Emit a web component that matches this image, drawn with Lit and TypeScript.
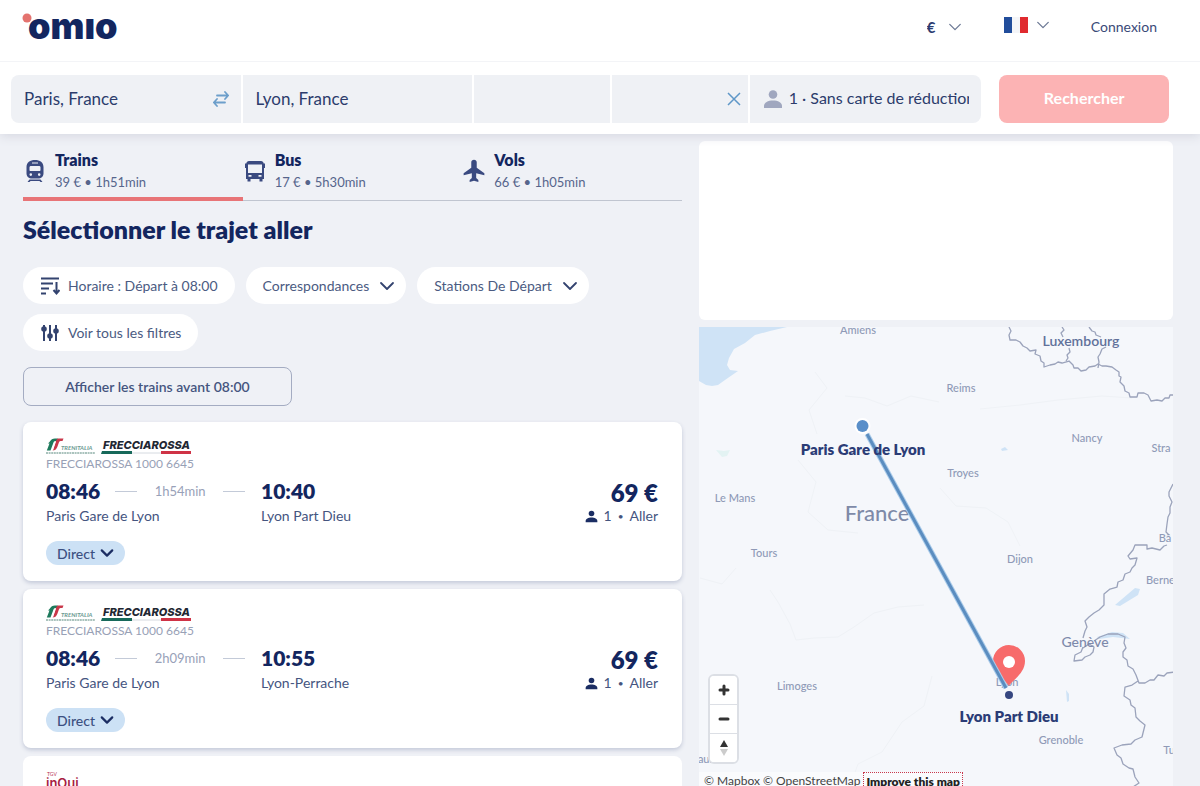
import { LitElement, html, svg, css } from "lit";
import { customElement, property, state } from "lit/decorators.js";

const chevron = (size: number, width: number) => html`
  <svg width=${size} height=${size} viewBox="0 0 16 16" fill="none" stroke="currentColor"
    stroke-width=${width} stroke-linecap="round" stroke-linejoin="round" aria-hidden="true">
    <path d="M2 5l6 6 6-6" />
  </svg>`;

const trainIcon = html`
  <svg width="24" height="24" viewBox="0 0 24 24" fill="currentColor" aria-hidden="true">
    <path fill-rule="evenodd" d="M12 1C7 1 3.500 3.600 3.500 8v6.500C3.500 17.500 6 19.500 9 19.500h6c3 0 5.500-2 5.500-5V8C20.500 3.600 17 1 12 1zM9 3.500h6v1H9zM8 7h8c1 0 1.500.5 1.500 1.500V11c0 .6-.4 1-1 1h-9c-.6 0-1-.4-1-1V8.500C6.500 7.500 7 7 8 7zM7.800 14.300a1.300 1.300 0 110 2.600 1.300 1.300 0 010-2.600zm8.400 0a1.300 1.300 0 110 2.600 1.300 1.300 0 010-2.600z" />
    <path d="M6.500 20.500h11l2 2.500h-2l-1-1h-9l-1 1h-2z" />
  </svg>`;

const busIcon = html`
  <svg width="24" height="24" viewBox="0 0 24 24" fill="currentColor" aria-hidden="true">
    <path fill-rule="evenodd" d="M6 2h12c1.500 0 2.500 1 2.700 2.500H22V9h-1v11h-1.500v2.500h-3V20h-9v2.500h-3V20H3V9H2V4.500h1.300C3.500 3 4.500 2 6 2zM5 5.500V14h14V5.500zM5.500 16v1.800h3V16zm10 0v1.800h3V16z" />
  </svg>`;

const planeIcon = html`
  <svg width="24" height="24" viewBox="1 1 21 22" fill="currentColor" aria-hidden="true">
    <path d="M21 16v-2l-7-5V4c0-1.300-1-2.200-2.500-2.200S9 2.700 9 4v5l-7 5v2l7.500-2v4.500l-2 1.700V22l4-1 4 1v-1.800l-2-1.700V14l7.500 2z" />
  </svg>`;

const personIcon = (size: number) => html`
  <svg width=${size} height=${size} viewBox="0 0 20 20" fill="currentColor" aria-hidden="true">
    <circle cx="10" cy="5.500" r="4.300" />
    <path d="M1 19v-2c0-3.500 4-5.500 9-5.500s9 2 9 5.500v2z" />
  </svg>`;

const sortIcon = html`
  <svg width="20" height="20" viewBox="0 0 20 20" fill="none" stroke="currentColor" stroke-width="2" aria-hidden="true">
    <path d="M1 2.500h18M1 7.500h12M1 12.500h8M1 17.500h5M16.500 6v11M13.500 14l3 3.500 3-3.500" />
  </svg>`;

const slidersIcon = html`
  <svg width="20" height="20" viewBox="0 0 20 20" fill="currentColor" stroke="currentColor" stroke-width="2" aria-hidden="true">
    <path d="M4 2v16M10 2v16M16 2v16" />
    <circle cx="4" cy="6" r="1.800" /><circle cx="10" cy="13" r="1.800" /><circle cx="16" cy="8" r="1.800" />
  </svg>`;

const freccia = html`
  <svg width="146" height="17" viewBox="0 0 146 17" role="img" aria-label="Trenitalia Frecciarossa">
    <path d="M3.500 4C5 1.500 6.500.5 9 .5h3L11 3H9.500c-1 0-1.500.5-2 1.500L4.500 12.500H.8L3.500 5.500H2z" fill="#1d7a5c" />
    <path d="M12 .5h5.500L16.500 3h-2c-1 .2-1.300.6-1.600 1.500l-1.600 4.500c-1 2.500-2.300 3.500-4.800 3.500L9.700 4C10.200 2.200 10.700 1 12 .5z" fill="#c9384a" />
    <path d="M8.300 4h1.500L7 12.500H5.300z" fill="#fff" />
    <text x="15" y="12" font-size="6" font-style="italic" font-weight="700" fill="#6b9a92">TRENITALIA</text>
    <path d="M0 15h49" stroke="#8fb0a8" stroke-width="1.500" stroke-dasharray="2 .6" />
    <text x="57" y="11" font-family="Inter, sans-serif" font-size="11" font-style="italic" font-weight="800" fill="#1f2733">FRECCIAROSSA</text>
    <path d="M56 13h30v3H55z" fill="#17695a" />
    <path d="M86 15h29" stroke="#d5dae0" />
    <path d="M115 13h30v3h-30z" fill="#cf3346" />
  </svg>`;

const inoui = html`
  <svg width="40" height="22" viewBox="0 0 40 22" role="img" aria-label="TGV inOui">
    <text x="1" y="5" font-size="5" fill="#b5304f">TGV</text>
    <text x="0" y="17" font-family="Inter, sans-serif" font-size="13" font-weight="600" fill="#a81f44">inOui</text>
  </svg>`;

type Trip = { brand: unknown; service: string; depart: string; from: string; duration: string; arrive: string; to: string; price: string };

const trips: Trip[] = [
  { brand: freccia, service: "FRECCIAROSSA 1000 6645", depart: "08:46", from: "Paris Gare de Lyon", duration: "1h54min", arrive: "10:40", to: "Lyon Part Dieu", price: "69 €" },
  { brand: freccia, service: "FRECCIAROSSA 1000 6645", depart: "08:46", from: "Paris Gare de Lyon", duration: "2h09min", arrive: "10:55", to: "Lyon-Perrache", price: "69 €" },
];

@customElement("trip-card")
class TripCard extends LitElement {
  @property({ attribute: false }) trip!: Trip;

  static styles = css`
    :host { display: block; background: #fff; border-radius: 8px; padding: 16px 24px 16px 23px; box-shadow: 0 2px 4px #c3c8d8; color: #45557f; }
    .brand { display: block; height: 17px; }
    .brand svg { display: block; }
    .service { font-size: 12px; line-height: 18px; color: #98a1b6; }
    .journey { display: grid; grid-template-columns: 215px 1fr auto; row-gap: 3px; margin-top: 6px; align-items: center; }
    .leg { display: flex; align-items: center; padding-right: 16px; gap: 15px; }
    .time { font-size: 21px; line-height: 24px; font-weight: 800; color: #13265f; }
    .rule { width: 22px; height: 1px; background: #c3cad8; }
    .duration { flex: 1; text-align: center; font-size: 13px; color: #98a1b8; }
    .price { align-self: end; font-size: 24px; line-height: 20px; font-weight: 800; color: #13265f; text-align: right; }
    .station, .fare { font-size: 14px; line-height: 20px; }
    .fare { display: flex; align-items: center; justify-content: flex-end; gap: 6px; }
    .fare .dot { font-size: 10px; }
    .fare svg { color: #1b2d63; }
    button { display: flex; align-items: center; gap: 5px; height: 24px; margin-top: 15px; padding: 0 11px; border: 0; border-radius: 12px; background: #cce1f5; color: #3c5081; font: 500 14px Lato, sans-serif; }
    button svg { color: #1b2d63; }
  `;

  render() {
    const t = this.trip;
    return html`
      <span class="brand">${t.brand}</span>
      <div class="service">${t.service}</div>
      <div class="journey">
        <div class="leg">
          <span class="time">${t.depart}</span><span class="rule"></span>
          <span class="duration">${t.duration}</span><span class="rule"></span>
        </div>
        <span class="time">${t.arrive}</span>
        <span class="price">${t.price}</span>
        <span class="station">${t.from}</span>
        <span class="station">${t.to}</span>
        <span class="fare">${personIcon(13)}<span>1</span><span class="dot">•</span><span>Aller</span></span>
      </div>
      <button type="button">Direct ${chevron(14, 2.5)}</button>
    `;
  }
}

const cities: [string, number, number][] = [
  ["Amiens", 858, 334], ["Reims", 961, 392], ["Nancy", 1087, 442], ["Troyes", 963, 477],
  ["Le Mans", 735, 502], ["Tours", 764, 557], ["Dijon", 1020, 563], ["Limoges", 797, 690],
  ["Grenoble", 1061, 744], ["Stra", 1161, 452], ["Bâ", 1165, 542], ["Tu", 1169, 754], ["Lyon", 1007, 686], ["au.", 705, 763],
];

@customElement("route-map")
class RouteMap extends LitElement {
  static styles = css`
    :host { display: block; position: relative; overflow: hidden; background: #f5f7fb; }
    .canvas { display: block; width: 100%; height: 100%; }
    .city { font-size: 11px; font-weight: 500; fill: #8f9ab7; }
    .town { font-size: 14px; font-weight: 500; fill: #7e8aab; }
    .country { font-size: 22px; font-weight: 500; fill: #7e8aa8; }
    .land { font-size: 14px; font-weight: 600; fill: #61719a; }
    .stop { font-size: 15px; font-weight: 800; fill: #2b3c76; }
    .controls { position: absolute; left: 9px; bottom: 22px; width: 31px; display: flex; flex-direction: column; border: 2px solid #dcdfe5; border-radius: 6px; background: #fff; box-sizing: border-box; overflow: hidden; }
    .controls button { height: 28px; padding: 0; border: 0; background: #fff; display: grid; place-items: center; color: #333; }
    .controls button + button { border-top: 1px solid #dcdfe5; height: 29px; }
    .credit { position: absolute; left: 0; bottom: -6px; display: flex; gap: 3px; padding-left: 5px; background: #fafbfd; font-size: 12px; line-height: 18px; color: #444; white-space: nowrap; }
    .credit a { color: inherit; text-decoration: none; }
    .credit .improve { border: 1px dotted #c8394d; padding: 0 2px; font-weight: 800; color: #222; }
  `;

  render() {
    return html`
      <svg class="canvas" viewBox="699 327 474 459" preserveAspectRatio="xMinYMin slice" role="img" aria-label="Paris – Lyon">
        <path fill="#cfe3f6" d="M699 327h88l-17 4-15 4-10 8-11 6-5 9-2 7 3 5 8 1-13 9-7 5-6 1-6-1-7-4z" />
        <g fill="none" stroke="#eff2f6" stroke-width="1">
          <path d="M770 590l8 12 12 22 6 16 18-2 24-1 16-10 20-14 24-6 26-2M815 372l12 16-18 22 8 24M845 396l20 2 22 8 24-10 28 6M980 409l40-4 38-5 44-4 30 2M700 578l22 6 14-16M798 460l18 22-8 30 20 18 30 3M940 488l16 18 30 2 22 14 12 24M850 786l8-22 24-12 20-30 22-16 8-30" />
        </g>
        <g fill="#cfe3f6">
          <path d="M1115 605l20-17 5 1-2 6-18 11zM1097 637l15-5 11 1 7 6-17-2-14 2zM1001 449l4-2 3 3-6 1zM1066 690l3 4v7l-2 1z" />
          <path d="M716 450l8 1 6-1-3 6-5 1z" fill="#e3f3f3" />
        </g>
        <g fill="none" stroke="#9ba3bb" stroke-width="1.300" stroke-linejoin="round">
          <path d="M1009 327l2 4-2 4 1 5 6 0 4 2 3 4 4 2 3 3 6-1-1 4 5 2 1 5 3 2v4l6-2 5-1 3-2 4 1 7-2 4 4 1 3 4 0 3 3 5-1 3-3 6-1 3-2 4 2 4 0 6 1 4 3 3 2 0 4 2 1-1 5 4 4 1 5 4 2 1 4 7 0 1-4 6 0 4 2 2 4 1 2 6-1 5 1 3-3 4 0 1-3 6 0 1 5 4 3 4 2" />
          <path d="M1062 327l2 3-3 3 2 4M1069 348l1 4-3 3 1 3-2 3M1089 327l3 4 3 1 1 3 5 2M1106 347l-4 2-2 5-2 3 1 5-1 6" />
          <path d="M1173 484l-4 8 0 4 3 6-2 5 0 6-2 4-1 7-1 8 3 3M1167 545l-3 1-4 4-8-2-5 1 0-4h-12l-2 5-5 6 2 3 7-1-2 7-3 3-2 4-5 2-2 6-5 2-1 5-7 2-6 5 0 11-5 5-5 3-5 4-4 4 2 6-2 4-2 7M1083 647l-2 5-6 3-1 6 8-1 3-3 5-2 3-3 1-5-5-3-6 4" />
          <path d="M1094 641l6-4 8-3 10 0 7 3-1 6 2 5-3 4 0 5 4 3 1 6 5 3 3 6 3 8 6 0 5-3 4 0 4-5 6 1 3-3 8-1M1138 681l-6 4-7 2-1 9 6 4 1 5 4 3 1 9 4 4 5 4-2 8-1 4-7 3-4 4-9 1-8 3 3 7 4 3 2 6 6 4 4 1 2 8 4 6-6 4" />
        </g>
        ${cities.map(([name, x, y]) => svg`<text class="city" x=${x} y=${y} text-anchor="middle">${name}</text>`)}
        <text class="land" x="1081" y="346" text-anchor="middle">Luxembourg</text>
        <text class="town" x="1085" y="647" text-anchor="middle">Genève</text>
        <text class="city" x="1146" y="584">Berne</text>
        <text class="country" x="877" y="521" text-anchor="middle">France</text>
        <path d="M1009 686c-2-5-16-12-16-25a16 16 0 0132 0c0 13-14 20-16 25z" fill="#f76b6b" />
        <circle cx="1009" cy="662" r="6" fill="#fff" />
        <path d="M867 434l139 254" stroke="#a9cbea" stroke-width="5" />
        <path d="M867 434l139 254" stroke="#5b8dc0" stroke-width="3" />
        <circle cx="862.500" cy="426" r="8" fill="#fff" />
        <circle cx="862.500" cy="426" r="6" fill="#5a8fc9" />
        <circle cx="1009" cy="695" r="4" fill="#364780" />
        <text class="stop" x="863" y="455" text-anchor="middle">Paris Gare de Lyon</text>
        <text class="stop" x="1009" y="722" text-anchor="middle">Lyon Part Dieu</text>
      </svg>
      <div class="controls">
        <button type="button" aria-label="Zoom avant"><svg width="12" height="12" viewBox="0 0 12 12" stroke="currentColor" stroke-width="3" stroke-linecap="round"><path d="M6 2v8M2 6h8" /></svg></button>
        <button type="button" aria-label="Zoom arrière"><svg width="12" height="12" viewBox="0 0 12 12" stroke="currentColor" stroke-width="3" stroke-linecap="round"><path d="M2 6h8" /></svg></button>
        <button type="button" aria-label="Nord"><svg width="10" height="18" viewBox="0 0 10 18"><path d="M5 1l4 7H1z" fill="#333" /><path d="M5 17l4-7H1z" fill="#ccc" /></svg></button>
      </div>
      <div class="credit">
        <a href="#mapbox">© Mapbox</a><a href="#osm">© OpenStreetMap</a><a class="improve" href="#improve">Improve this map</a>
      </div>
    `;
  }
}

@customElement("app-root")
class AppRoot extends LitElement {
  @state() private mode = "Trains";

  static styles = css`
    :host { display: flex; flex-direction: column; height: 100vh; overflow: hidden; background: #eff1f6; font-family: Lato, sans-serif; color: #45557f; }
    * { box-sizing: border-box; }
    button, input, select { font-family: inherit; color: inherit; margin: 0; }
    header { background: #fff; box-shadow: 0 2px 10px #d5d7e0; z-index: 1; flex: none; }
    .top { display: flex; align-items: center; height: 62px; padding: 0 43px 8px 22px; border-bottom: 1px solid #f3f4f7; }
    .logo { display: block; margin-right: auto; }
    .logo svg { display: block; }
    .currency { display: flex; align-items: center; gap: 12px; color: #6c7995; }
    .currency select { appearance: none; border: 0; background: none; padding: 0; font-size: 15px; font-weight: 700; color: #2b3b70; }
    .lang { display: flex; align-items: center; gap: 8px; margin: 0 41px 4px 42px; padding: 0; border: 0; background: none; color: #6c7995; }
    .login { font-size: 14px; color: #3a4a78; text-decoration: none; }
    .search { display: grid; grid-template-columns: 230fr 230fr 136fr 136fr 232fr 186fr; column-gap: 2px; padding: 13px 31px 11px 11px; height: 72px; }
    .field { display: flex; align-items: center; min-width: 0; background: #eff1f5; padding: 0 12px 0 13px; color: #2c3c6c; font-size: 16px; overflow: hidden; }
    .field:first-child { border-radius: 8px 0 0 8px; }
    .field.clearable { padding-right: 7px; }
    .field input { flex: 1; width: 100%; min-width: 0; border: 0; padding: 0 0 2px; background: none; font-size: 17px; outline: 0; }
    .field button { border: 0; background: none; padding: 0; display: flex; }
    .pax { border: 0; border-radius: 0 8px 8px 0; gap: 6px; }
    .pax svg { flex: none; color: #a0a7bf; }
    .pax span { overflow: hidden; white-space: nowrap; padding-bottom: 3px; }
    .go { margin-left: 16px; padding-bottom: 4px; border: 0; border-radius: 8px; background: #fcb3b4; color: #fff; font-size: 16px; font-weight: 700; }
    main { flex: 1; min-height: 0; display: grid; grid-template-columns: minmax(0, 659fr) minmax(0, 474fr); column-gap: 17px; padding: 0 27px 0 23px; }
    .results { min-height: 0; }
    .tabs { display: grid; grid-template-columns: repeat(3, 1fr); height: 67px; padding-top: 11px; border-bottom: 1px solid #c0c5d0; }
    .tab { display: flex; align-items: center; gap: 8px; padding: 0; margin-bottom: -1px; border: 0; border-bottom: 4px solid transparent; background: none; text-align: left; color: #3a4a80; }
    .tab.on { border-bottom-color: #e87477; }
    .tab strong { display: block; font-size: 16px; line-height: 22px; font-weight: 800; color: #13265f; }
    .tab small { display: block; font-size: 13px; line-height: 22px; color: #56658c; }
    h1 { margin: 12px 0 22px; font-size: 25px; line-height: 32px; font-weight: 800; color: #13265f; }
    .filters { display: flex; flex-wrap: wrap; gap: 10px 11px; }
    .pill { display: flex; align-items: center; height: 37px; gap: 10px; padding: 0 11px 0 17px; border: 0; border-radius: 19px; background: #fff; font-size: 14px; color: #4b5b82; }
    .pill.lead { padding: 0 17px; gap: 8px; }
    .pill svg { color: #33436f; }
    .earlier { display: block; margin: 16px 0; height: 39px; width: 269px; border: 1px solid #a4acc2; border-radius: 8px; background: none; font-size: 14px; font-weight: 600; }
    .cards { display: flex; flex-direction: column; gap: 8px; }
    .next { background: #fff; border-radius: 8px; padding: 15px 23px; height: 158px; }
    aside { display: flex; flex-direction: column; gap: 7px; padding-top: 7px; min-height: 0; }
    .promo { flex: none; height: 179px; background: #fff; border-radius: 6px; }
    route-map { flex: 1; min-height: 0; }
  `;

  private tab(name: string, icon: unknown, info: string) {
    return html`<button type="button" role="tab" aria-selected=${this.mode === name} class="tab ${this.mode === name ? "on" : ""}" @click=${() => (this.mode = name)}>
      ${icon}<span><strong>${name}</strong><small>${info}</small></span>
    </button>`;
  }

  render() {
    return html`
      <header>
        <div class="top">
          <a class="logo" href="#home" aria-label="Omio">
            <svg width="100" height="38" viewBox="0 0 100 38">
              <circle cx="5" cy="10" r="4.500" fill="#e4736f" />
              <text x="6" y="31" font-family="Inter, sans-serif" font-size="36" font-weight="900" fill="#13265f">omıo</text>
            </svg>
          </a>
          <label class="currency"><select aria-label="Devise"><option>€</option></select>${chevron(14, 1.5)}</label>
          <button class="lang" type="button" aria-label="Français">
            <svg width="24" height="16" viewBox="0 0 24 16"><path d="M0 0h8v16H0z" fill="#214d9b" /><path d="M8 0h8v16H8z" fill="#f4f5f8" /><path d="M16 0h8v16h-8z" fill="#e02a2f" /></svg>
            ${chevron(14, 1.5)}
          </button>
          <a class="login" href="#login">Connexion</a>
        </div>
        <form class="search" @submit=${(e: Event) => e.preventDefault()}>
          <div class="field">
            <input aria-label="Départ" .value=${"Paris, France"} />
            <button type="button" aria-label="Inverser">
              <svg width="16" height="18" viewBox="0 0 16 18" fill="none" stroke="#6d9fcb" stroke-width="1.800" stroke-linecap="round" stroke-linejoin="round"><path d="M4 5.500h11M12 2l3.200 3.500L12 9M12 12.500H1M4 9l-3.200 3.500L4 16" /></svg>
            </button>
          </div>
          <div class="field"><input aria-label="Arrivée" .value=${"Lyon, France"} /></div>
          <div class="field"><input aria-label="Date aller" /></div>
          <div class="field clearable">
            <input aria-label="Date retour" />
            <button type="button" aria-label="Effacer"><svg width="14" height="14" viewBox="0 0 14 14" stroke="#5f97c8" stroke-width="1.500"><path d="M1 1l12 12M13 1L1 13" /></svg></button>
          </div>
          <button class="field pax" type="button">${personIcon(20)}<span>1 · Sans carte de réduction</span></button>
          <button class="go" type="submit">Rechercher</button>
        </form>
      </header>
      <main>
        <section class="results">
          <div class="tabs" role="tablist">
            ${this.tab("Trains", trainIcon, "39 € • 1h51min")}
            ${this.tab("Bus", busIcon, "17 € • 5h30min")}
            ${this.tab("Vols", planeIcon, "66 € • 1h05min")}
          </div>
          <h1>Sélectionner le trajet aller</h1>
          <div class="filters">
            <button class="pill lead" type="button">${sortIcon}Horaire : Départ à 08:00</button>
            <button class="pill" type="button">Correspondances ${chevron(16, 1.8)}</button>
            <button class="pill" type="button">Stations De Départ ${chevron(16, 1.8)}</button>
            <button class="pill lead" type="button">${slidersIcon}Voir tous les filtres</button>
          </div>
          <button class="earlier" type="button">Afficher les trains avant 08:00</button>
          <div class="cards">
            ${trips.map((t) => html`<trip-card .trip=${t}></trip-card>`)}
            <div class="next">${inoui}</div>
          </div>
        </section>
        <aside>
          <div class="promo"></div>
          <route-map></route-map>
        </aside>
      </main>
    `;
  }
}
